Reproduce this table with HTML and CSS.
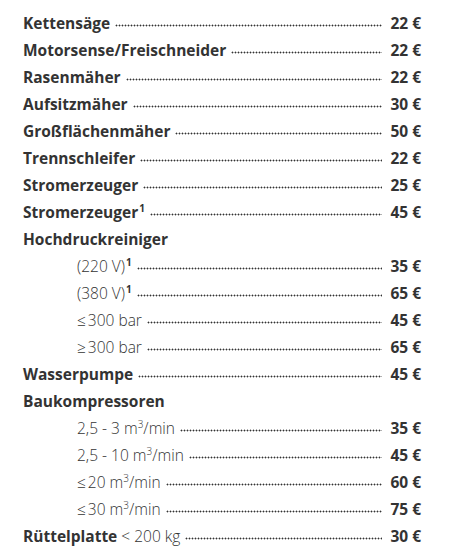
FILE: index.html
```html
<!DOCTYPE html>
<html lang="de">
<head>
    <meta charset="UTF-8">
    <meta name="viewport" content="width=device-width, initial-scale=1.0">
    <title>Preisliste Wartung</title>
    <link rel="stylesheet" href="styles.css">
</head>
<body>

    <!-- Preisliste -->
    <ul class="price-list">
        <li class="row"><span class="name">Kettensäge</span><span class="dots"></span><span class="price">22 €</span></li>
        <li class="row"><span class="name">Motorsense/Freischneider</span><span class="dots"></span><span class="price">22 €</span></li>
        <li class="row"><span class="name">Rasenmäher</span><span class="dots"></span><span class="price">22 €</span></li>
        <li class="row"><span class="name">Aufsitzmäher</span><span class="dots"></span><span class="price">30 €</span></li>
        <li class="row"><span class="name">Großflächenmäher</span><span class="dots"></span><span class="price">50 €</span></li>
        <li class="row"><span class="name">Trennschleifer</span><span class="dots"></span><span class="price">22 €</span></li>
        <li class="row"><span class="name">Stromerzeuger</span><span class="dots"></span><span class="price">25 €</span></li>
        <li class="row"><span class="name">Stromerzeuger<sup class="note">1</sup></span><span class="dots"></span><span class="price">45 €</span></li>
        <li class="row"><span class="name">Hochdruckreiniger</span></li>
        <li class="row sub"><span class="name">(220 V)<sup class="note">1</sup></span><span class="dots"></span><span class="price">35 €</span></li>
        <li class="row sub"><span class="name">(380 V)<sup class="note">1</sup></span><span class="dots"></span><span class="price">65 €</span></li>
        <li class="row sub"><span class="name"><span class="cmp">≤</span>300 bar</span><span class="dots"></span><span class="price">45 €</span></li>
        <li class="row sub"><span class="name"><span class="cmp">≥</span>300 bar</span><span class="dots"></span><span class="price">65 €</span></li>
        <li class="row"><span class="name">Wasserpumpe</span><span class="dots"></span><span class="price">45 €</span></li>
        <li class="row"><span class="name">Baukompressoren</span></li>
        <li class="row sub"><span class="name">2,5 - 3 m<sup>3</sup>/min</span><span class="dots"></span><span class="price">35 €</span></li>
        <li class="row sub"><span class="name">2,5 - 10 m<sup>3</sup>/min</span><span class="dots"></span><span class="price">45 €</span></li>
        <li class="row sub"><span class="name"><span class="cmp">≤</span>20 m<sup>3</sup>/min</span><span class="dots"></span><span class="price">60 €</span></li>
        <li class="row sub"><span class="name"><span class="cmp">≤</span>30 m<sup>3</sup>/min</span><span class="dots"></span><span class="price">75 €</span></li>
        <li class="row"><span class="name">Rüttelplatte <span class="extra">&lt; 200 kg</span></span><span class="dots"></span><span class="price">30 €</span></li>
    </ul>

</body>
</html>
```

FILE: styles.css
```css
* {
    margin: 0;
    padding: 0;
    box-sizing: border-box;
}

body {
    background-color: #ffffff;
    color: #333333;
    font-family: "Open Sans", Lato, sans-serif;
    font-size: 15.5px;
}

/* Preisliste */
.price-list {
    list-style: none;
    padding: 10px 38px 0 23px;
}

.row {
    display: flex;
    align-items: baseline;
    height: 27px;
    line-height: 27px;
    font-weight: bold;
}

.row.sub {
    padding-left: 54px;
    font-weight: 300;
}

.name {
    white-space: nowrap;
}

.extra {
    font-weight: 300;
}

.cmp {
    margin-right: 2px;
}

sup {
    font-size: 10px;
    line-height: 0;
    vertical-align: 6px;
}

sup.note {
    font-weight: bold;
    margin-left: 1px;
}

/* gepunktete Linie */
.dots {
    flex: 1;
    align-self: stretch;
    margin: 0 8px 0 5px;
    background-image: radial-gradient(circle at 1.5px 1.5px, #333 0.75px, transparent 1.15px);
    background-size: 3px 3px;
    background-repeat: repeat-x;
    background-position: 0 14px;
}

.price {
    font-weight: bold;
    white-space: nowrap;
}
```
